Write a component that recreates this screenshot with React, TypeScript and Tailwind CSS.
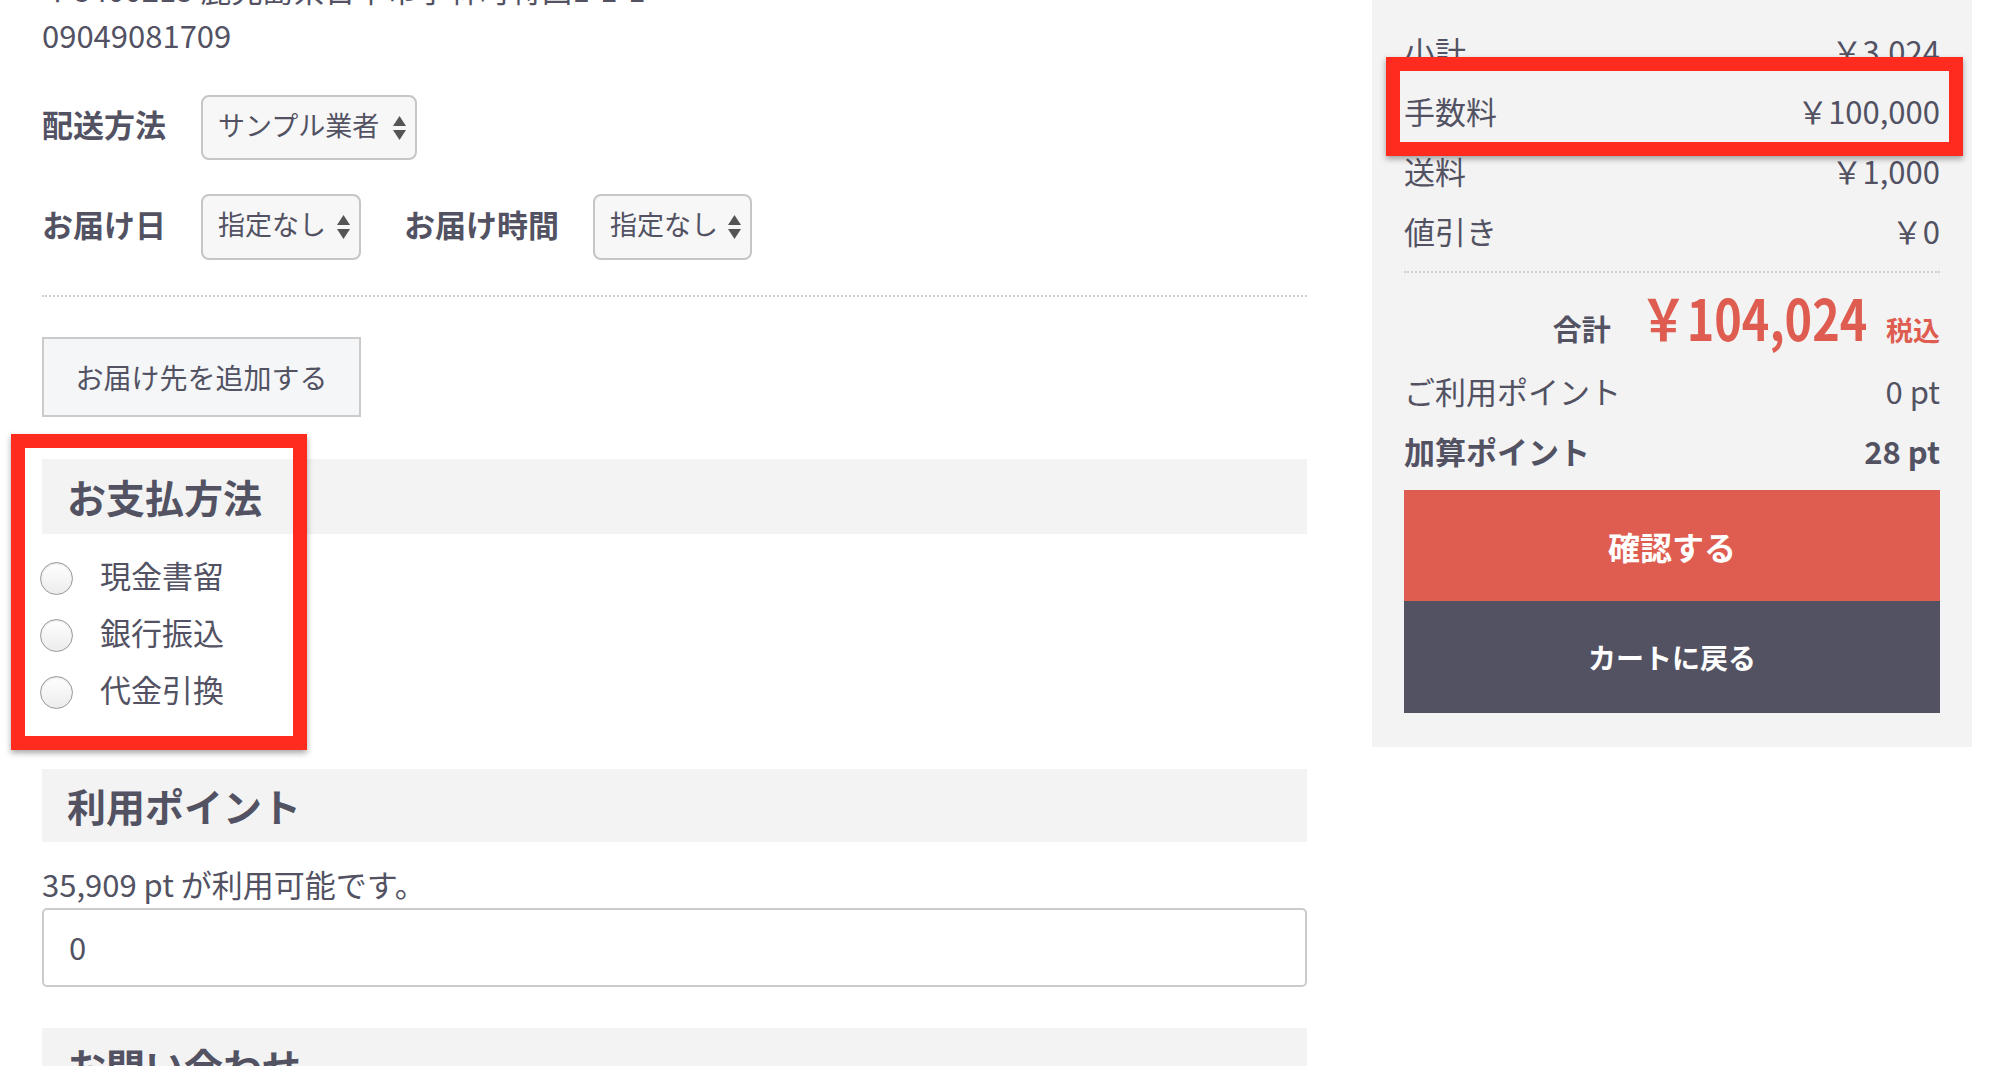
import React from "react";

const summaryRows = [
  { label: "小計", value: "￥3,024" },
  { label: "手数料", value: "￥100,000" },
  { label: "送料", value: "￥1,000" },
  { label: "値引き", value: "￥0" },
];

const payments = ["現金書留", "銀行振込", "代金引換"];

function SelectArrows() {
  return (
    <svg width="13" height="24" viewBox="0 0 13 24" className="shrink-0">
      <path d="M6.5 0 L13 10 L0 10 Z" fill="#555" />
      <path d="M0 14 L13 14 L6.5 24 Z" fill="#555" />
    </svg>
  );
}

function Select({ value, className }: { value: string; className: string }) {
  return (
    <div
      className={`h-full flex items-center justify-between pl-[15px] pr-[9px] bg-[#f7f7f7] border-2 border-[#c6c6c6] rounded-[8px] text-[27px] ${className}`}
    >
      <span className="pb-[5px]">{value}</span>
      <SelectArrows />
    </div>
  );
}

function SectionHeading({ title, className = "" }: { title: string; className?: string }) {
  return (
    <div className={`bg-[#f3f3f3] flex items-center pl-[25px] ${className}`}>
      <h2 className="text-[39px] font-bold">{title}</h2>
    </div>
  );
}

function Annotation({ className }: { className: string }) {
  return (
    <div
      className={`absolute border-[14px] border-[#ff2b1f] shadow-[0_3px_6px_rgba(0,0,0,0.35)] pointer-events-none ${className}`}
    />
  );
}

export default function App() {
  return (
    <div className="relative w-[1992px] h-[1066px] overflow-hidden bg-white text-[#525263] font-['Noto_Sans_CJK_JP',sans-serif]">
      <div className="flex items-start pl-[42px] gap-[65px]">
        {/* Left: delivery / payment */}
        <div className="w-[1265px] shrink-0 text-[31px]">
          <p className="-mt-[31px] h-[40px] leading-[40px]">〒8400215 鹿児島県日本市学林町特西1-1-1</p>
          <p className="mt-[6px] h-[40px] leading-[40px]">09049081709</p>

          <div className="mt-[40px] h-[65px] flex items-center">
            <span className="w-[159px] pb-[7px] font-bold">配送方法</span>
            <Select value="サンプル業者" className="w-[216px]" />
          </div>

          <div className="mt-[34px] h-[66px] flex items-center">
            <span className="w-[159px] pb-[5px] font-bold">お届け日</span>
            <Select value="指定なし" className="w-[160px]" />
            <span className="ml-[43px] w-[189px] pb-[5px] font-bold">お届け時間</span>
            <Select value="指定なし" className="w-[159px]" />
          </div>

          <div className="mt-[35px] border-t-2 border-dotted border-[#cfcfcf]" />

          <button className="mt-[40px] w-[319px] h-[80px] bg-[#f5f6f8] border-2 border-[#cbcbcb] text-[28px]">
            お届け先を追加する
          </button>

          <SectionHeading title="お支払方法" className="mt-[42px] h-[75px]" />
          <div className="mt-[16px]">
            {payments.map((p) => (
              <label key={p} className="h-[57px] flex items-center">
                <span className="ml-[-2px] w-[33px] h-[33px] rounded-full border border-[#999] bg-gradient-to-b from-white to-[#ececec] shadow-[inset_0_1px_2px_rgba(0,0,0,0.12)]" />
                <span className="ml-[27px] pb-[7px]">{p}</span>
              </label>
            ))}
          </div>

          <SectionHeading title="利用ポイント" className="mt-[48px] h-[73px]" />
          <p className="mt-[22px] h-[40px] leading-[40px]">35,909 pt が利用可能です。</p>
          <div className="mt-[4px] h-[79px] border-2 border-[#cbcbcb] rounded-[5px] flex items-center pl-[25px] text-[31px]">
            0
          </div>

          <SectionHeading title="お問い合わせ" className="mt-[41px] h-[75px]" />
        </div>

        {/* Right: order summary */}
        <div className="w-[600px] shrink-0 bg-[#f3f3f3] px-[32px] pt-[21px] pb-[34px] text-[31px]">
          {summaryRows.map((r) => (
            <div key={r.label} className="h-[60px] flex items-center justify-between">
              <span>{r.label}</span>
              <span>{r.value}</span>
            </div>
          ))}
          <div className="mt-[10px] border-t-2 border-dotted border-[#cfcfcf]" />
          <div className="mt-[7px] h-[72px] flex items-baseline justify-end">
            <span className="text-[29px] font-bold">合計</span>
            <span className="ml-[-21px] inline-block origin-right scale-x-[0.82] text-[57px] leading-[72px] font-bold text-[#de5d50]">
              ￥104,024
            </span>
            <span className="ml-[19px] text-[27px] font-bold text-[#de5d50]">税込</span>
          </div>
          <div className="mt-[9px] h-[60px] flex items-center justify-between">
            <span>ご利用ポイント</span>
            <span>0 pt</span>
          </div>
          <div className="h-[60px] flex items-center justify-between font-bold">
            <span>加算ポイント</span>
            <span>28 pt</span>
          </div>
          <button className="mt-[9px] w-full h-[111px] bg-[#de5d50] text-white font-bold text-[32px]">
            確認する
          </button>
          <button className="w-full h-[112px] bg-[#525263] text-white font-bold text-[28px]">
            カートに戻る
          </button>
        </div>
      </div>

      <Annotation className="left-[11px] top-[434px] w-[296px] h-[316px]" />
      <Annotation className="left-[1386px] top-[57px] w-[577px] h-[99px]" />
    </div>
  );
}
